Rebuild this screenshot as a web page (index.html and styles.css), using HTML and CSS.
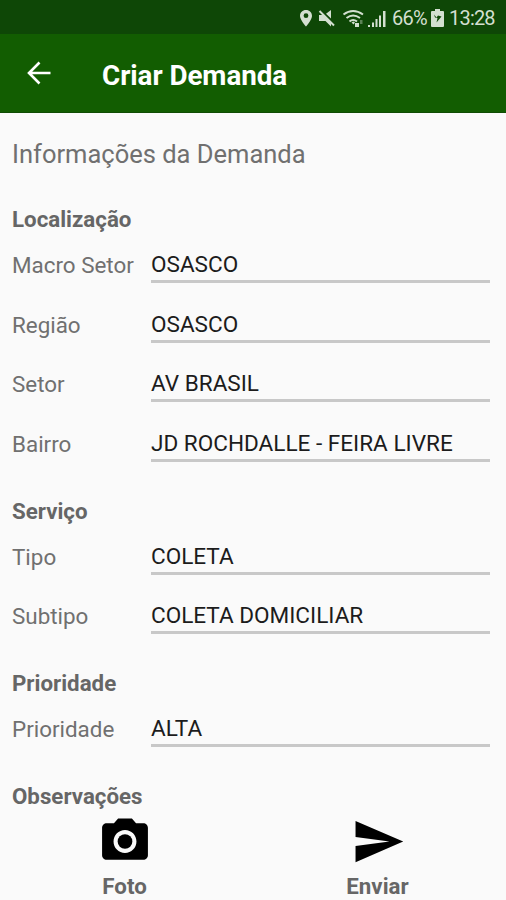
FILE: index.html
```html
<!DOCTYPE html>
<html lang="pt-BR">
<head>
<meta charset="utf-8">
<title>Criar Demanda</title>
<link rel="stylesheet" href="styles.css">
</head>
<body>
<div class="screen">
  <div class="status">
    <svg class="status-icons" width="90" height="22" viewBox="0 0 90 22" fill="#d3dfd0">
      <path fill-rule="evenodd" d="M8 3C4.500 3 2 5.500 2 8.900C2 12.500 8 19.500 8 19.500S14 12.500 14 8.900C14 5.500 11.500 3 8 3ZM8 6.300A2.400 2.400 0 1 1 8 11.100A2.400 2.400 0 1 1 8 6.300Z"/>
      <path d="M21 8h4.500l7.500 7.500v4L27.500 14H21ZM28 6.800L33 3v8.500Z"/>
      <path d="M21.500 4L36 18.500" stroke="#d3dfd0" stroke-width="2"/>
      <g fill="none" stroke="#d3dfd0" stroke-width="2">
        <path d="M45.500 7.500Q55 .5 65 7.500M48.500 11Q55 6 62 11M51.500 14.500Q55 11.500 59 14.500"/>
      </g>
      <path d="M53.500 15.500l2-1 1.500 1-1.500 2ZM57 16h4v4h-4Z"/>
      <path d="M62 13h2.500v4H62Z" opacity=".4"/>
      <path d="M71 18h2v2h-2ZM75 15.500h2v4.500h-2ZM78.500 12h2v8h-2ZM82 8.500h2v11.500h-2ZM86 4h2.500v16H86Z" transform="translate(-1 0)"/>
    </svg>
    <span class="battery-text">66%</span>
    <svg class="battery" width="13" height="20" viewBox="0 0 13 20">
      <path fill="#d3dfd0" d="M4 1h5v2h3q1 0 1 1v14q0 1-1 1H1q-1 0-1-1V4q0-1 1-1h3Z"/>
      <path d="M3 6.500l2.500 3 1.500-2 3.500 1-5 6 1-4.500-2.500-.5Z" fill="#0e4706"/>
    </svg>
    <span class="clock">13:28</span>
  </div>
  <header class="appbar">
    <svg class="back" width="24" height="24" viewBox="0 0 24 24"><path d="M23.500 12H2M12.500 1.500L2 12L12.500 22.500" fill="none" stroke="#fff" stroke-width="2.600"/></svg>
    <h1>Criar Demanda</h1>
  </header>
  <main class="form">
    <p class="intro">Informações da Demanda</p>
    <section>
      <h2>Localização</h2>
      <div class="row"><label>Macro Setor</label><div class="field">OSASCO</div></div>
      <div class="row"><label>Região</label><div class="field">OSASCO</div></div>
      <div class="row"><label>Setor</label><div class="field">AV BRASIL</div></div>
      <div class="row"><label>Bairro</label><div class="field">JD ROCHDALLE - FEIRA LIVRE</div></div>
    </section>
    <section>
      <h2>Serviço</h2>
      <div class="row"><label>Tipo</label><div class="field">COLETA</div></div>
      <div class="row"><label>Subtipo</label><div class="field">COLETA DOMICILIAR</div></div>
    </section>
    <section>
      <h2>Prioridade</h2>
      <div class="row"><label>Prioridade</label><div class="field">ALTA</div></div>
    </section>
    <section>
      <h2>Observações</h2>
    </section>
  </main>
  <footer class="actions">
    <div class="action">
      <svg width="56" height="56" viewBox="0 0 24 24"><circle cx="12" cy="12" r="3.200"/><path d="M9 2L7.170 4H4c-1.100 0-2 .9-2 2v12c0 1.100.9 2 2 2h16c1.100 0 2-.9 2-2V6c0-1.100-.9-2-2-2h-3.170L15 2H9zm3 15c-2.760 0-5-2.240-5-5s2.240-5 5-5 5 2.240 5 5-2.240 5-5 5z"/></svg>
      <span>Foto</span>
    </div>
    <div class="action">
      <svg width="56" height="56" viewBox="0 0 24 24"><path d="M2.200 21L23 12 2.200 3v7l14.800 2-14.800 2z"/></svg>
      <span>Enviar</span>
    </div>
  </footer>
</div>
</body>
</html>
```
FILE: styles.css
```css
* { box-sizing: border-box; }
body { margin: 0; background: #fafafa; font-family: Roboto, sans-serif; }
h1, h2, p { margin: 0; }
.screen { width: 506px; height: 900px; display: flex; flex-direction: column; overflow: hidden; }
.status { flex: none; height: 34px; background: #0e4706; color: #d3dfd0; display: flex; align-items: center; padding: 2px 8px 0 298px; font-size: 20px; letter-spacing: -0.8px; }
.status-icons { flex: none; }
.battery-text { width: 35px; margin-left: 4px; }
.battery { flex: none; margin: 0 5px 0 4px; }
.clock { white-space: nowrap; }
.appbar { flex: none; height: 79px; background: #125d01; color: #fff; display: flex; align-items: center; padding: 0 27px; border-bottom: 1px solid #104c04; }
.back { margin-top: -1px; }
.appbar h1 { margin: 5px 0 0 51px; font-size: 27.8px; line-height: 32px; font-weight: 700; letter-spacing: -0.05px; white-space: nowrap; }
.form { flex: none; height: 701px; overflow: hidden; padding: 0 16px 0 12px; color: #707070; }
.intro { height: 82px; padding-top: 26px; font-size: 25.5px; line-height: 30px; }
h2 { height: 53px; padding-top: 11px; font-size: 22.3px; line-height: 26px; font-weight: 700; color: #666; }
.row { height: 59.67px; display: flex; align-items: flex-start; font-size: 22.4px; line-height: 26px; white-space: nowrap; }
.row label { width: 139px; padding-top: 4px; }
.field { flex: 1; height: 35px; padding-top: 4px; border-bottom: 3px solid #c8c8c8; color: #1c1c1c; font-size: 22.55px; }
.actions { flex: none; height: 86px; display: flex; }
.action { width: 253px; display: flex; flex-direction: column; align-items: center; padding-right: 4px; font-size: 22.3px; font-weight: 700; color: #666; line-height: 28px; }
.action svg { fill: #000; }
.action span { margin-top: 3px; }
```
